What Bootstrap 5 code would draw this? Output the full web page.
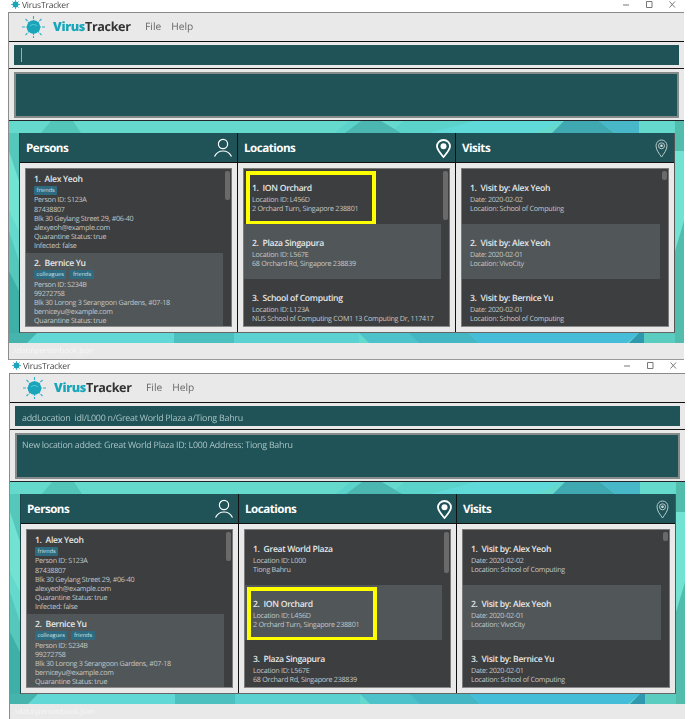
<!DOCTYPE html>
<html lang="en">
<head>
<meta charset="utf-8">
<title>VirusTracker</title>
<link href="https://cdn.jsdelivr.net/npm/bootstrap@5.3.0/dist/css/bootstrap.min.css" rel="stylesheet">
<style>
html,body{background:#fff;height:719px;overflow:hidden}
body{font-family:"Open Sans","Noto Sans",sans-serif;width:689px;text-rendering:geometricPrecision}
.vt-win{width:676px;height:361px;margin-left:8px;filter:blur(.4px);overflow:hidden}
.vt-win2{margin-left:9px}
.vt-title{height:13px;border-bottom:1px solid #8a8a8a;font-size:8.5px;letter-spacing:-.2px;line-height:11px;color:#444;padding-left:3px;gap:2px}
.vt-title svg{flex:none}
.vt-title .vt-ctl{margin-left:auto;gap:16px;padding-right:8px}
.vt-body{height:347px;border-left:1px solid #8c8c8c}
.vt-menu{height:29px;background:#e9e9e9;border-bottom:1px solid #111;padding-left:13px}
.vt-brand{font-size:12.6px;letter-spacing:-.35px;font-weight:700;color:#333;margin-left:8px;margin-right:14.5px}
.vt-brand b{color:#18a7ba}
.vt-mi{font-size:10.2px;color:#666;margin-right:10px}
.vt-cmdwrap{height:27px;background:#e9e9e9;border-bottom:1px solid #1a1a1a;padding:3px 5px}
.vt-cmd{height:20px;overflow:hidden;background:#1f5358;color:#a9c3c4;font-size:8.9px;letter-spacing:-.25px;line-height:23px;padding-left:7px;white-space:nowrap}
.vt-caret{display:block;width:1px;height:14px;margin-top:3px;background:#8fb4b6}
.vt-reswrap{height:52px;background:#e9e9e9;padding:3px 5px}
.vt-res{height:46px;background:#1f5358;border:2px solid #858a8a;color:#a9c3c4;font-size:8.9px;letter-spacing:-.25px;line-height:14px;padding:2.500px 5px;white-space:nowrap}
.vt-bg{height:222px;padding:12px 10px 10px;position:relative}
.vt-poly{position:absolute;inset:0;width:100%;height:100%}
.vt-grid{position:relative;display:grid;grid-template-columns:repeat(3,1fr);width:656px;height:200px;border-bottom:1px solid #666;border-right:1px solid #555;border-left:1px solid #1c4347}
.vt-col{background:#e9e9e9;min-width:0;border-right:1px solid #111;display:flex;flex-direction:column}
.vt-col:last-child{border-right:0}
.vt-head{height:30px;background:#1f5358;border-bottom:1px solid #111;color:#fff;font-size:11.6px;letter-spacing:-.5px;font-weight:700;padding:1px 4px 0 6px;flex:none}
.vt-head span{margin-top:2px}
.vt-pinmargin{margin-right:2.5px}
.vt-listwrap{padding:5px;height:169px;flex:none}
.vt-list{height:159px;background:#3c3e40;border:1px solid #7a7a7a;border-bottom-color:#8a8a8a;overflow:hidden}
.vt-items{flex:1 1 auto;min-width:0;border-radius:0;overflow:hidden}
.vt-item{border:0;border-radius:0!important;background:#3c3e40;color:#c4c8c8;font-size:7.2px;letter-spacing:-.28px;line-height:9.2px;padding:4px 0 1.5px 8px;position:relative;white-space:nowrap}
.vt-alt{background:#515759}
.vt-name{display:block;font-size:8.6px;letter-spacing:-.3px;font-weight:600;line-height:14px;margin-top:-.8px;margin-bottom:.8px;color:#e6e8e8}
.vt-loc{padding:12.5px 0 10.3px 8px}
.vt-tags{height:10.4px;margin-top:-1px;gap:4px}
.vt-tag{background:#2f6b80;color:#cfe3e8;font-size:5.6px;letter-spacing:0;font-weight:400;line-height:9px;height:9px;padding:0 2.500px;border-radius:1px;display:block}
.vt-track{width:8px;flex:none;padding:2px 1px 0 2px}
.vt-thumb{background:#6a6a6a;border-radius:2px;width:5px}
.vt-yellow{position:absolute;border:4px solid #ff0;left:2px;width:130px;height:54px;top:2px}
.vt-status{height:17px;background:#e9e9e9;border-bottom:1px solid #999;color:#f6f6f6;font-size:7.5px;line-height:16px;padding-left:3px}
</style>
</head>
<body>

<div class="vt-win">
  <div class="vt-title d-flex align-items-start">
    <svg width="9" height="9" viewBox="0 0 20 20"><g stroke="#1b9db3" stroke-width="1.6"><path d="M10 0v20M0 10h20M3 3l14 14M17 3L3 17"/></g><circle cx="10" cy="10" r="6.4" fill="#1aa5bb"/></svg>
    <span>VirusTracker</span>
    <div class="vt-ctl d-flex">
      <svg width="7" height="9" viewBox="0 0 7 9"><path d="M0 5h6" stroke="#777"/></svg>
      <svg width="7" height="9" viewBox="0 0 7 9"><path d="M.5 1.5h5.500v6H.5z" fill="none" stroke="#777"/></svg>
      <svg width="7" height="9" viewBox="0 0 7 9"><path d="M.5 1.5l5.500 6M6 1.500l-5.500 6" stroke="#777"/></svg>
    </div>
  </div>
  <div class="vt-body">
    <div class="vt-menu d-flex align-items-center">
      <svg width="23" height="22" viewBox="0 0 23 22"><g stroke="#2fb0c4" stroke-width="1.100" stroke-dasharray="3 1"><path d="M11.500 0v22M0 11h23M3.500 3l16 16M19.500 3l-16 16"/></g><circle cx="11.500" cy="11" r="6.800" fill="#1aa5bb"/><path d="M8 10c2-2 5-2 7 0" stroke="#5fd0dd" fill="none"/></svg>
      <span class="vt-brand"><b>Virus</b>Tracker</span>
      <span class="vt-mi">File</span><span class="vt-mi">Help</span>
    </div>
    <div class="vt-cmdwrap"><div class="vt-cmd"><span class="vt-caret"></span></div></div>
    <div class="vt-reswrap border-bottom border-dark"><div class="vt-res"></div></div>
    <div class="vt-bg">
      <svg class="vt-poly" viewBox="0 0 675 222" preserveAspectRatio="none"><rect width="675" height="222" fill="#64d9cc"/><path d="M32 12L42 0h22l8 12z" fill="#54c5b9"/><path d="M340 0h20l20 12h-54zM380 12l15-12h70l-40 12z" fill="#5bd2ca"/><path d="M352 0h20l20 12h-56z" fill="#4cb7b0"/><path d="M465 0h90l-30 12H420z" fill="#60d9d9"/><path d="M555 0h35l15 12h-62z" fill="#40a8b0"/><path d="M590 0h40v12h-25z" fill="#48b8c8"/><path d="M0 12h10v60l-10 20zM0 110l10 30v60H0z" fill="#55c8bb"/><path d="M0 30l10 30v50L0 90z" fill="#72e3d2"/><path d="M0 150l10 20v52H0z" fill="#3fb0a8"/><path d="M666 0h9v222h-9z" fill="#52bcad"/><path d="M666 30h9v70l-9 30z" fill="#72e2d2"/><path d="M0 212h175v10H20z" fill="#62d8d6"/><path d="M0 212h28l-10 10H0z" fill="#44b4ac"/><path d="M165 212h60v10h-60z" fill="#4bc0bf"/><path d="M225 212h125v10H225z" fill="#5bd1d2"/><path d="M350 212h70v10h-60z" fill="#4ec2ca"/><path d="M400 212h60l10 10h-60z" fill="#45b6c4"/><path d="M460 212h170l-12 10H470z" fill="#45bcd8"/><path d="M630 212h5v10h-15z" fill="#2f97ae"/><path d="M635 212h31v10h-31z" fill="#5accc0"/></svg>
      <div class="vt-grid">
        <div class="vt-col">
          <div class="vt-head d-flex align-items-center justify-content-between"><span>Persons</span>
            <svg width="20" height="20" viewBox="0 0 20 20" fill="none" stroke="#fff" stroke-width="1.200"><circle cx="10" cy="6" r="4.600"/><path d="M1.500 18.500c2-4 5-5.500 8.500-5.500s6.500 1.500 8.500 5.500"/></svg></div>
          <div class="vt-listwrap"><div class="vt-list d-flex">
            <div class="vt-items list-group">
              <div class="vt-item list-group-item"><span class="vt-name">1.&nbsp; Alex Yeoh</span><div class="vt-tags d-flex"><span class="vt-tag badge">friends</span></div>Person ID: S123A<br>87438807<br>Blk 30 Geylang Street 29, #06-40<br>alexyeoh@example.com<br>Quarantine Status: true<br>Infected: false</div>
              <div class="vt-item vt-alt list-group-item"><span class="vt-name">2.&nbsp; Bernice Yu</span><div class="vt-tags d-flex"><span class="vt-tag badge">colleagues</span><span class="vt-tag badge">friends</span></div>Person ID: S234B<br>99272758<br>Blk 30 Lorong 3 Serangoon Gardens, #07-18<br>berniceyu@example.com<br>Quarantine Status: true<br>Infected: false</div>
            </div>
            <div class="vt-track"><div class="vt-thumb" style="height:29px"></div></div>
          </div></div>
        </div>
        <div class="vt-col">
          <div class="vt-head d-flex align-items-center justify-content-between"><span>Locations</span>
            <svg width="15" height="19" viewBox="0 0 15 19"><path d="M7.500 1C3.800 1 1 3.800 1 7.300c0 3.600 4 7.700 6.500 10.700 2.500-3 6.500-7.100 6.500-10.700C14 3.800 11.200 1 7.500 1z" fill="none" stroke="#fff" stroke-width="1.800"/><circle cx="7.500" cy="7.300" r="3" fill="#fff"/></svg></div>
          <div class="vt-listwrap"><div class="vt-list d-flex">
            <div class="vt-items list-group">
              <div class="vt-item vt-loc list-group-item"><span class="vt-yellow"></span><span class="vt-name">1.&nbsp; ION Orchard</span>Location ID: L456D<br>2 Orchard Turn, Singapore 238801</div>
              <div class="vt-item vt-loc vt-alt list-group-item"><span class="vt-name">2.&nbsp; Plaza Singapura</span>Location ID: L567E<br>68 Orchard Rd, Singapore 238839</div>
              <div class="vt-item vt-loc list-group-item"><span class="vt-name">3.&nbsp; School of Computing</span>Location ID: L123A<br>NUS School of Computing COM1 13 Computing Dr, 117417</div>
            </div>
            <div class="vt-track"><div class="vt-thumb" style="height:49px"></div></div>
          </div></div>
        </div>
        <div class="vt-col">
          <div class="vt-head d-flex align-items-center justify-content-between"><span>Visits</span>
            <svg width="13" height="19" viewBox="0 0 13 19" class="vt-pinmargin" fill="none" stroke="#b9caca"><path d="M6.500 18C4.500 15 1 11 1 6.800 1 3.500 3.400 1 6.500 1S12 3.500 12 6.800C12 11 8.500 15 6.500 18z"/><circle cx="6.500" cy="6.800" r="3"/><circle cx="6.500" cy="6.800" r="1.300" fill="#d5dfdf" stroke="none"/></svg></div>
          <div class="vt-listwrap"><div class="vt-list d-flex">
            <div class="vt-items list-group">
              <div class="vt-item vt-loc list-group-item"><span class="vt-name">1.&nbsp; Visit by: Alex Yeoh</span>Date: 2020-02-02<br>Location: School of Computing</div>
              <div class="vt-item vt-loc vt-alt list-group-item"><span class="vt-name">2.&nbsp; Visit by: Alex Yeoh</span>Date: 2020-02-01<br>Location: VivoCity</div>
              <div class="vt-item vt-loc list-group-item"><span class="vt-name">3.&nbsp; Visit by: Bernice Yu</span>Date: 2020-02-01<br>Location: School of Computing</div>
            </div>
            <div class="vt-track"><div class="vt-thumb" style="height:9px"></div></div>
          </div></div>
        </div>
      </div>
    </div>
    <div class="vt-status">.\data\personbook.json</div>
  </div>
</div>

<div class="vt-win vt-win2">
  <div class="vt-title d-flex align-items-start">
    <svg width="9" height="9" viewBox="0 0 20 20"><g stroke="#1b9db3" stroke-width="1.6"><path d="M10 0v20M0 10h20M3 3l14 14M17 3L3 17"/></g><circle cx="10" cy="10" r="6.4" fill="#1aa5bb"/></svg>
    <span>VirusTracker</span>
    <div class="vt-ctl d-flex">
      <svg width="7" height="9" viewBox="0 0 7 9"><path d="M0 5h6" stroke="#777"/></svg>
      <svg width="7" height="9" viewBox="0 0 7 9"><path d="M.5 1.5h5.500v6H.5z" fill="none" stroke="#777"/></svg>
      <svg width="7" height="9" viewBox="0 0 7 9"><path d="M.5 1.5l5.500 6M6 1.500l-5.500 6" stroke="#777"/></svg>
    </div>
  </div>
  <div class="vt-body">
    <div class="vt-menu d-flex align-items-center">
      <svg width="23" height="22" viewBox="0 0 23 22"><g stroke="#2fb0c4" stroke-width="1.100" stroke-dasharray="3 1"><path d="M11.500 0v22M0 11h23M3.500 3l16 16M19.500 3l-16 16"/></g><circle cx="11.500" cy="11" r="6.800" fill="#1aa5bb"/><path d="M8 10c2-2 5-2 7 0" stroke="#5fd0dd" fill="none"/></svg>
      <span class="vt-brand"><b>Virus</b>Tracker</span>
      <span class="vt-mi">File</span><span class="vt-mi">Help</span>
    </div>
    <div class="vt-cmdwrap"><div class="vt-cmd">addLocation&nbsp; idl/L000 n/Great World Plaza a/Tiong Bahru</div></div>
    <div class="vt-reswrap border-bottom border-dark"><div class="vt-res">New location added: Great World Plaza ID: L000 Address: Tiong Bahru</div></div>
    <div class="vt-bg">
      <svg class="vt-poly" viewBox="0 0 675 222" preserveAspectRatio="none"><rect width="675" height="222" fill="#64d9cc"/><path d="M32 12L42 0h22l8 12z" fill="#54c5b9"/><path d="M340 0h20l20 12h-54zM380 12l15-12h70l-40 12z" fill="#5bd2ca"/><path d="M352 0h20l20 12h-56z" fill="#4cb7b0"/><path d="M465 0h90l-30 12H420z" fill="#60d9d9"/><path d="M555 0h35l15 12h-62z" fill="#40a8b0"/><path d="M590 0h40v12h-25z" fill="#48b8c8"/><path d="M0 12h10v60l-10 20zM0 110l10 30v60H0z" fill="#55c8bb"/><path d="M0 30l10 30v50L0 90z" fill="#72e3d2"/><path d="M0 150l10 20v52H0z" fill="#3fb0a8"/><path d="M666 0h9v222h-9z" fill="#52bcad"/><path d="M666 30h9v70l-9 30z" fill="#72e2d2"/><path d="M0 212h175v10H20z" fill="#62d8d6"/><path d="M0 212h28l-10 10H0z" fill="#44b4ac"/><path d="M165 212h60v10h-60z" fill="#4bc0bf"/><path d="M225 212h125v10H225z" fill="#5bd1d2"/><path d="M350 212h70v10h-60z" fill="#4ec2ca"/><path d="M400 212h60l10 10h-60z" fill="#45b6c4"/><path d="M460 212h170l-12 10H470z" fill="#45bcd8"/><path d="M630 212h5v10h-15z" fill="#2f97ae"/><path d="M635 212h31v10h-31z" fill="#5accc0"/></svg>
      <div class="vt-grid">
        <div class="vt-col">
          <div class="vt-head d-flex align-items-center justify-content-between"><span>Persons</span>
            <svg width="20" height="20" viewBox="0 0 20 20" fill="none" stroke="#fff" stroke-width="1.200"><circle cx="10" cy="6" r="4.600"/><path d="M1.500 18.500c2-4 5-5.500 8.500-5.500s6.500 1.500 8.500 5.500"/></svg></div>
          <div class="vt-listwrap"><div class="vt-list d-flex">
            <div class="vt-items list-group">
              <div class="vt-item list-group-item"><span class="vt-name">1.&nbsp; Alex Yeoh</span><div class="vt-tags d-flex"><span class="vt-tag badge">friends</span></div>Person ID: S123A<br>87438807<br>Blk 30 Geylang Street 29, #06-40<br>alexyeoh@example.com<br>Quarantine Status: true<br>Infected: false</div>
              <div class="vt-item vt-alt list-group-item"><span class="vt-name">2.&nbsp; Bernice Yu</span><div class="vt-tags d-flex"><span class="vt-tag badge">colleagues</span><span class="vt-tag badge">friends</span></div>Person ID: S234B<br>99272758<br>Blk 30 Lorong 3 Serangoon Gardens, #07-18<br>berniceyu@example.com<br>Quarantine Status: true<br>Infected: false</div>
            </div>
            <div class="vt-track"><div class="vt-thumb" style="height:29px"></div></div>
          </div></div>
        </div>
        <div class="vt-col">
          <div class="vt-head d-flex align-items-center justify-content-between"><span>Locations</span>
            <svg width="15" height="19" viewBox="0 0 15 19"><path d="M7.500 1C3.800 1 1 3.800 1 7.300c0 3.600 4 7.700 6.500 10.700 2.500-3 6.500-7.100 6.500-10.700C14 3.800 11.200 1 7.500 1z" fill="none" stroke="#fff" stroke-width="1.800"/><circle cx="7.500" cy="7.300" r="3" fill="#fff"/></svg></div>
          <div class="vt-listwrap"><div class="vt-list d-flex">
            <div class="vt-items list-group">
              <div class="vt-item vt-loc list-group-item"><span class="vt-name">1.&nbsp; Great World Plaza</span>Location ID: L000<br>Tiong Bahru</div>
              <div class="vt-item vt-loc vt-alt list-group-item"><span class="vt-yellow"></span><span class="vt-name">2.&nbsp; ION Orchard</span>Location ID: L456D<br>2 Orchard Turn, Singapore 238801</div>
              <div class="vt-item vt-loc list-group-item"><span class="vt-name">3.&nbsp; Plaza Singapura</span>Location ID: L567E<br>68 Orchard Rd, Singapore 238839</div>
            </div>
            <div class="vt-track"><div class="vt-thumb" style="height:41px"></div></div>
          </div></div>
        </div>
        <div class="vt-col">
          <div class="vt-head d-flex align-items-center justify-content-between"><span>Visits</span>
            <svg width="13" height="19" viewBox="0 0 13 19" class="vt-pinmargin" fill="none" stroke="#b9caca"><path d="M6.500 18C4.500 15 1 11 1 6.800 1 3.500 3.400 1 6.500 1S12 3.500 12 6.800C12 11 8.500 15 6.500 18z"/><circle cx="6.500" cy="6.800" r="3"/><circle cx="6.500" cy="6.800" r="1.300" fill="#d5dfdf" stroke="none"/></svg></div>
          <div class="vt-listwrap"><div class="vt-list d-flex">
            <div class="vt-items list-group">
              <div class="vt-item vt-loc list-group-item"><span class="vt-name">1.&nbsp; Visit by: Alex Yeoh</span>Date: 2020-02-02<br>Location: School of Computing</div>
              <div class="vt-item vt-loc vt-alt list-group-item"><span class="vt-name">2.&nbsp; Visit by: Alex Yeoh</span>Date: 2020-02-01<br>Location: VivoCity</div>
              <div class="vt-item vt-loc list-group-item"><span class="vt-name">3.&nbsp; Visit by: Bernice Yu</span>Date: 2020-02-01<br>Location: School of Computing</div>
            </div>
            <div class="vt-track"><div class="vt-thumb" style="height:9px"></div></div>
          </div></div>
        </div>
      </div>
    </div>
    <div class="vt-status">.\data\personbook.json</div>
  </div>
</div>

<script src="https://cdn.jsdelivr.net/npm/bootstrap@5.3.0/dist/js/bootstrap.bundle.min.js"></script>
</body>
</html>
